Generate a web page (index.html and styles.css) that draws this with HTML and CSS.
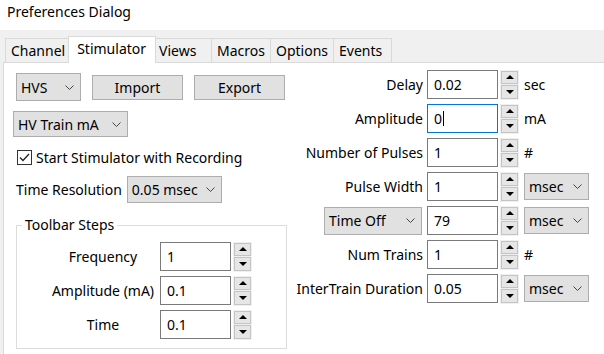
FILE: index.html
```html
<!DOCTYPE html>
<html lang="en">
<head>
  <meta charset="UTF-8" />
  <title>Preferences Dialog</title>
  <link rel="stylesheet" href="styles.css">
</head>
<body>
  <div class="titlebar">Preferences Dialog</div>

  <div class="tabbar">
    <div class="tab">Channel</div>
    <div class="tab active">Stimulator</div>
    <div class="tab">Views</div>
    <div class="tab">Macros</div>
    <div class="tab">Options</div>
    <div class="tab">Events</div>
  </div>

  <div class="panel">
    <!-- left column -->
    <div class="col-left">
      <div class="row-top">
        <div class="combo combo-hvs"><span>HVS</span><svg class="chev" width="9" height="5" viewBox="0 0 9 5"><polyline points="0.5,0.5 4.5,4.5 8.5,0.5"/></svg></div>
        <button class="btn">Import</button>
        <button class="btn">Export</button>
      </div>

      <div class="combo combo-mode"><span>HV Train mA</span><svg class="chev" width="9" height="5" viewBox="0 0 9 5"><polyline points="0.5,0.5 4.5,4.5 8.5,0.5"/></svg></div>

      <div class="check-row">
        <span class="checkbox"><svg width="13" height="13" viewBox="0 0 13 13"><polyline points="2,6.5 5,9.5 11,3"/></svg></span>
        <span>Start Stimulator with Recording</span>
      </div>

      <div class="res-row">
        <span>Time Resolution</span>
        <div class="combo combo-res"><span>0.05 msec</span><svg class="chev" width="9" height="5" viewBox="0 0 9 5"><polyline points="0.5,0.5 4.5,4.5 8.5,0.5"/></svg></div>
      </div>

      <fieldset class="group">
        <legend>Toolbar Steps</legend>
        <div class="group-row">
          <span class="group-label">Frequency</span>
          <div class="field">1</div>
          <div class="spin"><span class="spin-btn"><svg width="8" height="4" viewBox="0 0 8 4"><path d="M0 4 L4 0 L8 4Z"/></svg></span><span class="spin-btn"><svg width="8" height="4" viewBox="0 0 8 4"><path d="M0 0 L4 4 L8 0Z"/></svg></span></div>
        </div>
        <div class="group-row">
          <span class="group-label">Amplitude (mA)</span>
          <div class="field">0.1</div>
          <div class="spin"><span class="spin-btn"><svg width="8" height="4" viewBox="0 0 8 4"><path d="M0 4 L4 0 L8 4Z"/></svg></span><span class="spin-btn"><svg width="8" height="4" viewBox="0 0 8 4"><path d="M0 0 L4 4 L8 0Z"/></svg></span></div>
        </div>
        <div class="group-row">
          <span class="group-label">Time</span>
          <div class="field">0.1</div>
          <div class="spin"><span class="spin-btn"><svg width="8" height="4" viewBox="0 0 8 4"><path d="M0 4 L4 0 L8 4Z"/></svg></span><span class="spin-btn"><svg width="8" height="4" viewBox="0 0 8 4"><path d="M0 0 L4 4 L8 0Z"/></svg></span></div>
        </div>
      </fieldset>
    </div>

    <!-- right column -->
    <div class="col-right">
      <div class="param">
        <div class="param-label">Delay</div>
        <div class="field">0.02</div>
        <div class="spin"><span class="spin-btn"><svg width="8" height="4" viewBox="0 0 8 4"><path d="M0 4 L4 0 L8 4Z"/></svg></span><span class="spin-btn"><svg width="8" height="4" viewBox="0 0 8 4"><path d="M0 0 L4 4 L8 0Z"/></svg></span></div>
        <span class="unit">sec</span>
      </div>
      <div class="param">
        <div class="param-label">Amplitude</div>
        <div class="field focused">0<span class="caret"></span></div>
        <div class="spin"><span class="spin-btn"><svg width="8" height="4" viewBox="0 0 8 4"><path d="M0 4 L4 0 L8 4Z"/></svg></span><span class="spin-btn"><svg width="8" height="4" viewBox="0 0 8 4"><path d="M0 0 L4 4 L8 0Z"/></svg></span></div>
        <span class="unit">mA</span>
      </div>
      <div class="param">
        <div class="param-label">Number of Pulses</div>
        <div class="field">1</div>
        <div class="spin"><span class="spin-btn"><svg width="8" height="4" viewBox="0 0 8 4"><path d="M0 4 L4 0 L8 4Z"/></svg></span><span class="spin-btn"><svg width="8" height="4" viewBox="0 0 8 4"><path d="M0 0 L4 4 L8 0Z"/></svg></span></div>
        <span class="unit">#</span>
      </div>
      <div class="param">
        <div class="param-label">Pulse Width</div>
        <div class="field">1</div>
        <div class="spin"><span class="spin-btn"><svg width="8" height="4" viewBox="0 0 8 4"><path d="M0 4 L4 0 L8 4Z"/></svg></span><span class="spin-btn"><svg width="8" height="4" viewBox="0 0 8 4"><path d="M0 0 L4 4 L8 0Z"/></svg></span></div>
        <div class="combo combo-unit"><span>msec</span><svg class="chev" width="9" height="5" viewBox="0 0 9 5"><polyline points="0.5,0.5 4.5,4.5 8.5,0.5"/></svg></div>
      </div>
      <div class="param">
        <div class="param-label">
          <div class="combo combo-off"><span>Time Off</span><svg class="chev" width="9" height="5" viewBox="0 0 9 5"><polyline points="0.5,0.5 4.5,4.5 8.5,0.5"/></svg></div>
        </div>
        <div class="field">79</div>
        <div class="spin"><span class="spin-btn"><svg width="8" height="4" viewBox="0 0 8 4"><path d="M0 4 L4 0 L8 4Z"/></svg></span><span class="spin-btn"><svg width="8" height="4" viewBox="0 0 8 4"><path d="M0 0 L4 4 L8 0Z"/></svg></span></div>
        <div class="combo combo-unit"><span>msec</span><svg class="chev" width="9" height="5" viewBox="0 0 9 5"><polyline points="0.5,0.5 4.5,4.5 8.5,0.5"/></svg></div>
      </div>
      <div class="param">
        <div class="param-label">Num Trains</div>
        <div class="field">1</div>
        <div class="spin"><span class="spin-btn"><svg width="8" height="4" viewBox="0 0 8 4"><path d="M0 4 L4 0 L8 4Z"/></svg></span><span class="spin-btn"><svg width="8" height="4" viewBox="0 0 8 4"><path d="M0 0 L4 4 L8 0Z"/></svg></span></div>
        <span class="unit">#</span>
      </div>
      <div class="param">
        <div class="param-label">InterTrain Duration</div>
        <div class="field">0.05</div>
        <div class="spin"><span class="spin-btn"><svg width="8" height="4" viewBox="0 0 8 4"><path d="M0 4 L4 0 L8 4Z"/></svg></span><span class="spin-btn"><svg width="8" height="4" viewBox="0 0 8 4"><path d="M0 0 L4 4 L8 0Z"/></svg></span></div>
        <div class="combo combo-unit"><span>msec</span><svg class="chev" width="9" height="5" viewBox="0 0 9 5"><polyline points="0.5,0.5 4.5,4.5 8.5,0.5"/></svg></div>
      </div>
    </div>
  </div>
</body>
</html>
```

FILE: styles.css
```css
/* Root Variables */
:root {
  --dialog-bg: #f0f0f0;
  --tab-border: #d9d9d9;
  --ctrl-bg: #e1e1e1;
  --ctrl-border: #adadad;
  --field-border: #7a7a7a;
  --focus: #0078d7;
  --text: #000;
}

body {
  margin: 0;
  width: 604px;
  height: 354px;
  overflow: hidden;
  background: var(--dialog-bg);
  color: var(--text);
  font-family: "Noto Sans", "Segoe UI", sans-serif;
  font-size: 14px;
}

/* Title */
.titlebar {
  height: 30px;
  padding-left: 7px;
  line-height: 24px;
  background: #fff;
}

/* Tabs */
.tabbar {
  display: flex;
  align-items: flex-end;
  height: 32px;
  padding-left: 5px;
}

.tab {
  position: relative;
  box-sizing: border-box;
  height: 24px;
  min-width: 59px;
  padding: 2px 5px 0 5px;
  line-height: 19px;
  border: 1px solid var(--tab-border);
  border-bottom: none;
  margin-left: -1px;
  background: var(--dialog-bg);
}

.tab:first-child {
  margin-left: 0;
}

.tab.active {
  z-index: 2;
  height: 27px;
  margin: 0 -2px -1px -3px;
  padding: 2px 9px 0 8px;
  background: #fff;
}

/* Panel */
.panel {
  display: flex;
  box-sizing: border-box;
  width: 620px;
  height: 292px;
  margin-left: 3px;
  background: #fff;
  border-left: 1px solid var(--tab-border);
  border-top: 1px solid var(--tab-border);
}

.col-left {
  box-sizing: border-box;
  width: 296px;
  padding: 10px 0 0 12px;
}

.col-right {
  display: flex;
  flex-direction: column;
  gap: 5px;
  padding-top: 7px;
}

/* Controls */
.combo {
  display: flex;
  align-items: center;
  justify-content: space-between;
  box-sizing: border-box;
  height: 27px;
  padding: 0 6px 0 4px;
  background: var(--ctrl-bg);
  border: 1px solid var(--ctrl-border);
  white-space: nowrap;
}

.chev polyline {
  fill: none;
  stroke: #444;
  stroke-width: 1;
}

.btn {
  box-sizing: border-box;
  width: 91px;
  height: 25px;
  padding: 0;
  background: var(--ctrl-bg);
  border: 1px solid var(--ctrl-border);
  font: inherit;
  color: var(--text);
}

.row-top {
  display: flex;
  align-items: center;
  gap: 11px;
}

.combo-hvs {
  width: 65px;
  height: 28px;
}

.combo-mode {
  width: 115px;
  height: 26px;
  margin: 10px 0 0 -3px;
}

.check-row {
  display: flex;
  align-items: center;
  gap: 4px;
  height: 20px;
  margin: 10px 0 0 1px;
}

.checkbox {
  display: flex;
  box-sizing: border-box;
  width: 15px;
  height: 15px;
  border: 1px solid #333;
  background: #fff;
}

.checkbox polyline {
  fill: none;
  stroke: #222;
  stroke-width: 1.3;
}

.res-row {
  display: flex;
  align-items: center;
  gap: 5px;
  margin-top: 9px;
}

.combo-res {
  width: 95px;
}

/* Group box */
.group {
  box-sizing: border-box;
  width: 271px;
  margin: 12px 0 0;
  padding: 7px 0 9px;
  border: 1px solid #dcdcdc;
}

.group legend {
  margin-left: 5px;
  padding: 0 3px;
  line-height: 20px;
}

.group-row {
  display: flex;
  align-items: center;
  height: 29px;
  padding-left: 31px;
}

.group-row + .group-row {
  margin-top: 5px;
}

.group-label {
  width: 110px;
  text-align: center;
  white-space: nowrap;
}

.group-row .field {
  margin-left: 2px;
}

/* Number fields */
.field {
  display: flex;
  align-items: center;
  box-sizing: border-box;
  width: 71px;
  height: 29px;
  padding-left: 6px;
  background: #fff;
  border: 1px solid var(--field-border);
}

.field.focused {
  border-color: var(--focus);
}

.caret {
  width: 1px;
  height: 15px;
  margin-left: 1px;
  background: #000;
}

.spin {
  display: flex;
  flex-direction: column;
  gap: 1px;
  box-sizing: border-box;
  width: 19px;
  height: 30px;
  margin-left: 2px;
  padding: 1px;
  background: #f0f0f0;
}

.spin-btn {
  flex: 1;
  display: flex;
  align-items: center;
  justify-content: center;
  background: #e6e6e6;
  border: 1px solid #c4c4c4;
}

.spin-btn path {
  fill: #000;
}

/* Right column rows */
.param {
  display: flex;
  align-items: center;
  height: 29px;
}

.param-label {
  display: flex;
  justify-content: flex-end;
  width: 123px;
  white-space: nowrap;
}

.param .field {
  margin-left: 4px;
}

.unit {
  margin-left: 5px;
}

.combo-unit {
  width: 65px;
  margin-left: 5px;
}

.combo-off {
  width: 98px;
  height: 28px;
  margin-right: 1px;
}
```
